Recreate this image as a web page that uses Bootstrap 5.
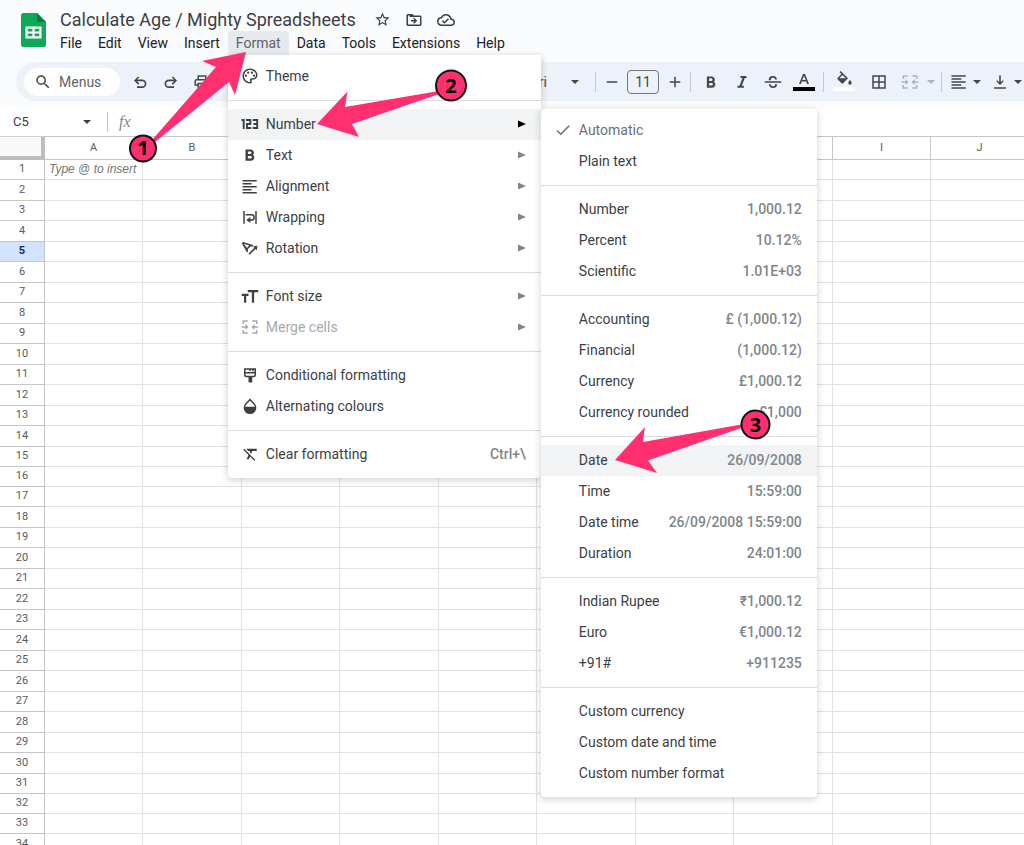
<!DOCTYPE html>
<html lang="en">
<head>
<meta charset="utf-8">
<meta name="viewport" content="width=device-width, initial-scale=1">
<title>Calculate Age / Mighty Spreadsheets</title>
<link href="https://cdn.jsdelivr.net/npm/bootstrap@5.3.0/dist/css/bootstrap.min.css" rel="stylesheet">
<style>
  body { font-family: Roboto, "Liberation Sans", sans-serif; font-size: 14px; line-height: 20px; color: #3c4043; background: #fff; }
  button { font: inherit; color: inherit; background: none; border: 0; padding: 0; }
  svg { display: block; flex: none; fill: currentColor; }
  .app-head { background: #f9fbfd; padding: 8px 0 7px 16px; }
  .logo { width: 44px; padding: 5px 0 0 5px; }
  .doc-title { font-size: 18px; line-height: 22px; color: #3c4043; margin: 0; font-weight: 400; }
  .title-row { height: 23px; gap: 14px; }
  .title-row .doc-title { margin-right: 4px; }
  .menubar { margin-left: -8px; }
  .menubar .top-item { display: block; height: 24px; padding: 2px 8px; color: #202124; border-radius: 4px 4px 0 0; }
  .menubar .top-item.is-open { background: #e6e9ed; color: #5f6368; }
  .sheet-menu { position: absolute; z-index: 20; background: #fff; padding: 6px 0 8px; box-shadow: 0 2px 6px 1px rgba(60,64,67,.2); border-radius: 0 0 4px 4px; }
  .format-menu { top: 24px; left: 0; width: 313px; }
  .number-menu { top: 0; left: 100%; width: 276px; border-radius: 4px; }
  .menu-line { position: relative; }
  .menu-line > button { display: flex; align-items: center; width: 100%; height: 31px; padding: 0 15px 2px 13px; gap: 7px; text-align: left; }
  .menu-line > button > span:first-of-type { flex: 1; }
  .menu-line.is-hot > button { background: #f1f3f4; }
  .menu-line.is-hot > button .arrow { color: #000; }
  .menu-line > button:disabled { color: #a6a9ae; }
  .menu-line .hint { color: #80868b; font-weight: 500; }
  .menu-line .chosen { color: #6b6f73; }
  .arrow { color: #80868b; }
  .number-menu .menu-line > button:not(.chosen) { padding-left: 38px; }
  .menu-rule { height: 1px; margin: 8px 0; background: #dadce0; opacity: 1; border: 0; }
  .callout-art { position: absolute; z-index: 40; pointer-events: none; overflow: visible; }
  .callout-art text { font: 700 20px "Open Sans", "Noto Sans", sans-serif; text-anchor: middle; fill: #000; stroke: none; }
  .tools { margin-top: 7px; height: 39px; background: #edf2fa; border-radius: 20px 0 0 20px; padding-left: 8px; color: #444746; }
  .search-pill { width: 97px; height: 28px; background: #fff; border-radius: 14px; padding-left: 10px; gap: 7px; color: #5f6368; }
  .tool { width: 31px; height: 30px; display: flex; align-items: center; justify-content: center; flex: none; }
  .tool-sm { width: 12px; }
  .tool-md { width: 25px; }
  .divide { width: 1px; height: 20px; background: #c7c7c7; flex: none; }
  .size-box { width: 32px; height: 24px; border: 1px solid #747775; border-radius: 4px; background: transparent; text-align: center; padding: 0; color: #444746; flex: none; }
  .formula-row { height: 28px; padding-left: 13px; }
  .name-box { width: 70px; border: 0; padding: 0; font-size: 13px; color: #3c4043; }
  .fx { font: italic 16px "Liberation Serif", serif; color: #80868b; margin-left: 11px; }
  .formula-in { border: 0; }
  .sheet-area { overflow: hidden; min-height: 0; }
  .cells { table-layout: fixed; border-collapse: separate; border-spacing: 0; width: 100%; min-width: 1029px; font: 11px/14px Roboto, "Liberation Sans", sans-serif; }
  .cells th, .cells td { padding: 0; border: 0 solid #e1e1e1; border-width: 0 1px 1px 0; overflow: hidden; white-space: nowrap; }
  .cells th { border-color: #c4c7c5; font-weight: 400; text-align: center; color: #575b5f; }
  .cells thead th { height: 24px; border-top-width: 1px; }
  .cells tbody tr { height: 20px; }
  .cells tbody tr:nth-child(2n) { height: 21px; }
  .cells tbody tr:nth-child(16n) { height: 20px; }
  .cells .corner { background: #f8f9fa; border: solid #bdbdbd; border-width: 1px 4px 4px 0; border-top-color: #d0d0d0; }
  .cells .current { background: #d3e3fd; color: #0b2a5e; font-weight: 700; }
  .cells .tip { font: italic 12px/14px "Liberation Sans", sans-serif; color: #757575; padding-left: 4px; }
  .c-side { width: 45px; } .c-a { width: 98px; } .c-b { width: 99px; }
</style>
</head>
<body class="vh-100 overflow-hidden d-flex flex-column">
<header class="app-head">
  <div class="d-flex">
    <div class="logo">
      <svg width="25" height="34" viewBox="0 0 25 34"><path fill="#0fa958" d="M2.500 0H16l9 9v22.500a2.500 2.500 0 0 1-2.500 2.500h-20A2.500 2.500 0 0 1 0 31.500v-29A2.500 2.500 0 0 1 2.500 0z"/><path fill="#087f3f" d="M16 0l9 9h-7a2 2 0 0 1-2-2z"/><path fill="#fff" fill-rule="evenodd" d="M4.500 13.500h16v12h-16zm2.200 2.200v2.700h4.700v-2.700zm6.900 0v2.700h4.700v-2.700zm-6.900 4.900v2.700h4.700v-2.700zm6.900 0v2.700h4.700v-2.700z"/></svg>
    </div>
    <div class="flex-grow-1">
      <div class="title-row d-flex align-items-center">
        <h1 class="doc-title">Calculate Age / Mighty Spreadsheets</h1>
        <button aria-label="Star"><svg width="17" height="17" viewBox="0 0 24 24"><path d="M22 9.240l-7.190-.62L12 2 9.190 8.630 2 9.240l5.460 4.730L5.820 21 12 17.270 18.180 21l-1.630-7.030L22 9.240zM12 15.400l-3.760 2.270 1-4.280-3.320-2.880 4.380-.38L12 6.100l1.710 4.040 4.380.38-3.320 2.880 1 4.280L12 15.400z"/></svg></button>
        <button aria-label="Move"><svg width="18" height="18" viewBox="0 0 24 24"><path d="M20 6h-8l-2-2H4c-1.100 0-2 .9-2 2v12c0 1.100.9 2 2 2h16c1.100 0 2-.9 2-2V8c0-1.100-.9-2-2-2zm0 12H4V6h2v2h14v10z"/><path d="M12.200 9l4 4-4 4-1.300-1.300 1.700-1.800H8v-1.800h4.600l-1.700-1.800z"/></svg></button>
        <button aria-label="Saved"><svg width="18" height="18" viewBox="0 0 24 24"><path d="M19.350 10.040A7.490 7.490 0 0 0 12 4C9.110 4 6.600 5.640 5.350 8.040A5.994 5.994 0 0 0 0 14c0 3.310 2.690 6 6 6h13c2.760 0 5-2.240 5-5 0-2.640-2.050-4.780-4.650-4.960zM19 18H6c-2.210 0-4-1.790-4-4 0-2.050 1.530-3.760 3.560-3.970l1.070-.11.5-.95A5.469 5.469 0 0 1 12 6c2.620 0 4.880 1.860 5.390 4.430l.3 1.500 1.530.11A2.980 2.980 0 0 1 22 15c0 1.650-1.350 3-3 3zm-9-3.820l-2.090-2.090L6.500 13.500 10 17l6.010-6.010-1.410-1.410z"/></svg></button>
      </div>
      <ul class="menubar list-unstyled d-flex mb-0">
        <li><button class="top-item">File</button></li>
        <li><button class="top-item">Edit</button></li>
        <li><button class="top-item">View</button></li>
        <li><button class="top-item">Insert</button></li>
        <li class="position-relative">
          <button class="top-item is-open" aria-expanded="true">Format</button>
          <ul class="sheet-menu format-menu list-unstyled">
            <li class="menu-line"><button><svg width="18" height="18" viewBox="0 0 24 24"><path d="M12 22C6.490 22 2 17.510 2 12S6.490 2 12 2s10 4.040 10 9c0 3.310-2.690 6-6 6h-1.770c-.28 0-.5.22-.5.5 0 .12.050.23.130.33.410.47.640 1.060.640 1.670A2.500 2.500 0 0 1 12 22zm0-18c-4.410 0-8 3.590-8 8s3.590 8 8 8c.28 0 .5-.22.5-.5a.54.54 0 0 0-.14-.35c-.41-.46-.63-1.050-.63-1.650a2.500 2.500 0 0 1 2.500-2.500H16c2.210 0 4-1.790 4-4 0-3.860-3.590-7-8-7z"/><circle cx="6.500" cy="11.500" r="1.500"/><circle cx="9.500" cy="7.500" r="1.500"/><circle cx="14.500" cy="7.500" r="1.500"/><circle cx="17.500" cy="11.500" r="1.500"/></svg><span>Theme</span></button></li>
            <li class="menu-rule"></li>
            <li class="menu-line is-hot"><button aria-expanded="true"><svg width="18" height="18" viewBox="0 0 18 18" fill="none" stroke="currentColor" stroke-width="1.900" style="fill:none"><path d="M.5 5h2.200v9M5 5h4.300v4H6v4h4.300M11.700 5h4.500v8h-4.500M12.500 9h3.700"/></svg><span>Number</span><svg class="arrow" width="8" height="8" viewBox="0 0 8 8"><path d="M0 .5L8 4 0 7.500z"/></svg></button>
              <ul class="sheet-menu number-menu list-unstyled">
                <li class="menu-line"><button class="chosen"><svg width="18" height="18" viewBox="0 0 24 24"><path d="M9 16.170L4.830 12l-1.420 1.410L9 19 21 7l-1.410-1.410z"/></svg><span>Automatic</span></button></li>
                <li class="menu-line"><button><span>Plain text</span></button></li>
                <li class="menu-rule"></li>
                <li class="menu-line"><button><span>Number</span><span class="hint">1,000.12</span></button></li>
                <li class="menu-line"><button><span>Percent</span><span class="hint">10.12%</span></button></li>
                <li class="menu-line"><button><span>Scientific</span><span class="hint">1.01E+03</span></button></li>
                <li class="menu-rule"></li>
                <li class="menu-line"><button><span>Accounting</span><span class="hint">£ (1,000.12)</span></button></li>
                <li class="menu-line"><button><span>Financial</span><span class="hint">(1,000.12)</span></button></li>
                <li class="menu-line"><button><span>Currency</span><span class="hint">£1,000.12</span></button></li>
                <li class="menu-line"><button><span>Currency rounded</span><span class="hint">£1,000</span></button></li>
                <li class="menu-rule"></li>
                <li class="menu-line is-hot"><button><span>Date</span><span class="hint">26/09/2008</span></button>
                  <svg class="callout-art" style="left:74px;top:-20px" width="158" height="52" viewBox="615 426 158 52"><path fill="#ff2f70" d="M615 461L645 428 643 443 744 425 744 428 648 461.500 657 474z"/><circle cx="755.500" cy="425.500" r="14" fill="#ff2f70" stroke="#111" stroke-width="2"/><text x="755.500" y="432.500">3</text></svg>
                </li>
                <li class="menu-line"><button><span>Time</span><span class="hint">15:59:00</span></button></li>
                <li class="menu-line"><button><span>Date time</span><span class="hint">26/09/2008 15:59:00</span></button></li>
                <li class="menu-line"><button><span>Duration</span><span class="hint">24:01:00</span></button></li>
                <li class="menu-rule"></li>
                <li class="menu-line"><button><span>Indian Rupee</span><span class="hint">₹1,000.12</span></button></li>
                <li class="menu-line"><button><span>Euro</span><span class="hint">€1,000.12</span></button></li>
                <li class="menu-line"><button><span>+91#</span><span class="hint">+911235</span></button></li>
                <li class="menu-rule"></li>
                <li class="menu-line"><button><span>Custom currency</span></button></li>
                <li class="menu-line"><button><span>Custom date and time</span></button></li>
                <li class="menu-line"><button><span>Custom number format</span></button></li>
              </ul>
              <svg class="callout-art" style="left:89px;top:-40px" width="150" height="70" viewBox="317 69 150 70"><path fill="#ff2f70" d="M317 124L347.500 91.500 345 107 439 91 439 94 352 124 359 137z"/><circle cx="451" cy="85.500" r="15" fill="#ff2f70" stroke="#111" stroke-width="2"/><text x="451" y="92.500">2</text></svg>
            </li>
            <li class="menu-line"><button><svg width="18" height="18" viewBox="0 0 24 24"><path d="M15.600 11.800c1-.7 1.600-1.800 1.600-2.800 0-2.500-1.900-4.500-4.500-4.500H6v15h7.400c2.400 0 4.300-2 4.300-4.300 0-1.500-.8-2.800-2.100-3.400zM9.200 7.200h3a1.800 1.800 0 0 1 0 3.600h-3zm3.600 9.500H9.200v-3.500h3.600a1.750 1.750 0 0 1 0 3.500z"/></svg><span>Text</span><svg class="arrow" width="8" height="8" viewBox="0 0 8 8"><path d="M0 .5L8 4 0 7.500z"/></svg></button></li>
            <li class="menu-line"><button><svg width="18" height="18" viewBox="0 0 24 24"><path d="M2 4h19v2H2zm0 4h12v2H2zm0 4h19v2H2zm0 4h12v2H2zm0 4h19v2H2z"/></svg><span>Alignment</span><svg class="arrow" width="8" height="8" viewBox="0 0 8 8"><path d="M0 .5L8 4 0 7.500z"/></svg></button></li>
            <li class="menu-line"><button><svg width="18" height="18" viewBox="0 0 24 24"><path d="M3 4h2v17H3zm16 0h2v17h-2zM6 8h8a4 4 0 0 1 0 9h-1.500v3L7 16l5.500-4v3H14a2 2 0 0 0 0-5H6z"/></svg><span>Wrapping</span><svg class="arrow" width="8" height="8" viewBox="0 0 8 8"><path d="M0 .5L8 4 0 7.500z"/></svg></button></li>
            <li class="menu-line"><button><svg width="18" height="18" viewBox="0 0 24 24"><path fill-rule="evenodd" d="M1 5.500L3 4l13 4-.2 2.200-2.600-.5-4.300 4 .8 2.500L8 18zm3 .8l3.800 5.600 3.200-3.200zM22 9l-1 6-1.800-1.700-7.700 7.700-1.500-1.500 7.700-7.700L16 10z"/></svg><span>Rotation</span><svg class="arrow" width="8" height="8" viewBox="0 0 8 8"><path d="M0 .5L8 4 0 7.500z"/></svg></button></li>
            <li class="menu-rule"></li>
            <li class="menu-line"><button><svg width="18" height="18" viewBox="0 0 24 24"><path d="M9 4v3h5.500v14h3V7H23V4H9zM1 12h3v9h3v-9h3V9H1v3z"/></svg><span>Font size</span><svg class="arrow" width="8" height="8" viewBox="0 0 8 8"><path d="M0 .5L8 4 0 7.500z"/></svg></button></li>
            <li class="menu-line"><button disabled><svg width="18" height="18" viewBox="0 0 24 24"><path d="M2 3h7v2H4v3H2zm13 0h7v5h-2V5h-5zM2 16h2v3h5v2H2zm18 0h2v5h-7v-2h5zM1 11h5V8l4 4-4 4v-3H1zm22 0h-5V8l-4 4 4 4v-3h5z"/></svg><span>Merge cells</span><svg class="arrow" width="8" height="8" viewBox="0 0 8 8"><path d="M0 .5L8 4 0 7.500z"/></svg></button></li>
            <li class="menu-rule"></li>
            <li class="menu-line"><button><svg width="18" height="18" viewBox="0 0 24 24"><path fill-rule="evenodd" d="M5 3h15v9a3 3 0 0 1-3 3h-2v6a1 1 0 0 1-1 1h-3a1 1 0 0 1-1-1v-6H7a3 3 0 0 1-3-3V4a1 1 0 0 1 1-1zm1 2v3h12V5h-1v2h-2V5h-2v1.500h-2V5zm0 5v1.500A1.500 1.500 0 0 0 7.500 13h9a1.500 1.500 0 0 0 1.500-1.500V10z"/></svg><span>Conditional formatting</span></button></li>
            <li class="menu-line"><button><svg width="18" height="18" viewBox="0 0 24 24"><path fill-rule="evenodd" d="M12 2l6 6.200a8.500 8.500 0 1 1-12 0zm0 3L7.300 9.700A6 6 0 0 0 5.600 13h12.800a6 6 0 0 0-1.700-3.300z"/></svg><span>Alternating colours</span></button></li>
            <li class="menu-rule"></li>
            <li class="menu-line"><button><svg width="18" height="18" viewBox="0 0 24 24"><path d="M3.270 5L2 6.270l6.970 6.970L6.500 19h3l1.570-3.660L16.730 21 18 19.730 3.550 5.270 3.270 5zM6 5v.18L8.820 8h2.400l-.72 1.680 2.100 2.100L14.210 8H20V5H6z" transform="translate(1 0)"/></svg><span>Clear formatting</span><span class="hint">Ctrl+\</span></button></li>
          </ul>
          <svg class="callout-art" style="left:-99px;top:20px" width="120" height="120" viewBox="129 51 120 120"><path fill="#ff2f70" d="M246 52L202 61 216 67 152 140 155 142 229 82 235 95z"/><circle cx="143" cy="148.500" r="13" fill="#ff2f70" stroke="#111" stroke-width="2"/><text x="143" y="155">1</text></svg>
        </li>
        <li><button class="top-item">Data</button></li>
        <li><button class="top-item">Tools</button></li>
        <li><button class="top-item">Extensions</button></li>
        <li><button class="top-item">Help</button></li>
      </ul>
    </div>
  </div>
  <div class="tools d-flex align-items-center">
    <button class="search-pill d-flex align-items-center"><svg width="18" height="18" viewBox="0 0 24 24" color="#444746"><path d="M15.500 14h-.79l-.28-.27A6.471 6.471 0 0 0 16 9.500 6.500 6.500 0 1 0 9.500 16c1.610 0 3.090-.59 4.230-1.570l.27.28v.79l5 4.990L20.490 19l-4.990-5zm-6 0C7.010 14 5 11.990 5 9.500S7.010 5 9.500 5 14 7.010 14 9.500 11.990 14 9.500 14z"/></svg>Menus</button>
    <button class="tool ms-1" aria-label="Undo"><svg width="18" height="18" viewBox="0 0 24 24"><path d="M8 20v-2.200h7a3.400 3.400 0 0 0 0-6.800H8l3 3-1.500 1.500L4 10l5.500-5.500L11 6 8 8.800h7a5.600 5.600 0 0 1 0 11.200z"/></svg></button>
    <button class="tool" aria-label="Redo"><svg width="18" height="18" viewBox="0 0 24 24"><path d="M16 20v-2.200H9A3.400 3.400 0 0 1 9 11h7l-3 3 1.500 1.500L20 10l-5.500-5.500L13 6l3 2.800H9A5.600 5.600 0 0 0 9 20z"/></svg></button>
    <button class="tool" aria-label="Print"><svg width="18" height="18" viewBox="0 0 24 24"><path fill-rule="evenodd" d="M6 3h12v5h1a3 3 0 0 1 3 3v6h-4v4H6v-4H2v-6a3 3 0 0 1 3-3h1zm2 2v3h8V5zm8 14v-4H8v4zm2-4v-2H6v2H4v-4a1 1 0 0 1 1-1h14a1 1 0 0 1 1 1v4z"/></svg></button>
    <button class="font-pick d-flex align-items-center justify-content-end gap-4" style="width:365px">Calibri <svg width="8" height="4" viewBox="0 0 8 4"><path d="M0 0h8L4 4z"/></svg></button>
    <span class="divide ms-3"></span>
    <button class="tool" aria-label="Decrease font size"><svg width="18" height="18" viewBox="0 0 24 24"><path d="M5 11h14v2H5z"/></svg></button>
    <input class="size-box" aria-label="Font size" value="11">
    <button class="tool" aria-label="Increase font size"><svg width="18" height="18" viewBox="0 0 24 24"><path d="M11 5h2v6h6v2h-6v6h-2v-6H5v-2h6z"/></svg></button>
    <span class="divide me-1"></span>
    <button class="tool" aria-label="Bold"><svg width="18" height="18" viewBox="0 0 24 24"><path d="M15.600 11.800c1-.7 1.600-1.800 1.600-2.800 0-2.500-1.900-4.500-4.500-4.500H6.500v15h7c2.400 0 4.200-2 4.200-4.300 0-1.500-.8-2.800-2.100-3.400zM9.500 7.100h2.700a1.800 1.800 0 0 1 0 3.700H9.500zm3.300 9.700H9.500v-3.600h3.300a1.800 1.800 0 0 1 0 3.600z"/></svg></button>
    <button class="tool" aria-label="Italic"><svg width="18" height="18" viewBox="0 0 24 24"><path d="M10 4v2.600h2.600L8.700 17H6v2.600h8.500V17h-2.700l3.900-10.400H18V4z"/></svg></button>
    <button class="tool" aria-label="Strikethrough"><svg width="18" height="18" viewBox="0 0 24 24"><path d="M1 11h22v2H1zM6.500 9.500C6 6 8.500 4 12 4c3 0 5 1.500 5.300 4.500h-2.500C14.500 7 13.600 6.200 12 6.200c-2.200 0-3.300 1.300-2.800 3.300zM6.500 15c.3 3.300 2.500 5 5.500 5 3.500 0 5.700-2 5.400-5h-2.600c.1 1.800-1 2.800-2.800 2.800-1.700 0-2.800-.9-3-2.800z"/></svg></button>
    <button class="tool me-1" aria-label="Text colour"><svg width="22" height="18" viewBox="0 0 22 18"><path fill-rule="evenodd" d="M10 1h2l4 10h-1.900l-.9-2.500H8.700L7.800 11H6zm1 2L9.300 7h3.400z"/><path fill="#000" d="M0 14h22v4H0z"/></svg></button>
    <span class="divide me-1"></span>
    <button class="tool" aria-label="Fill colour"><svg width="22" height="22" viewBox="0 0 22 22"><path fill-rule="evenodd" d="M6.500 1l1.200-1 7.300 7.300-5 5a1 1 0 0 1-1.400 0l-4-4a1 1 0 0 1 0-1.400L8.400 3zM9.500 4L6.300 7.300h6.500zM17 9s1.700 1.900 1.700 3a1.700 1.700 0 0 1-3.400 0c0-1.100 1.700-3 1.700-3z"/><path fill="#fff" d="M0 16h22v4H0z"/></svg></button>
    <button class="tool ms-1" aria-label="Borders"><svg width="18" height="18" viewBox="0 0 24 24"><path fill-rule="evenodd" d="M3 3h18v18H3zm2 2v6h6V5zm8 0v6h6V5zm-8 8v6h6v-6zm8 0v6h6v-6z"/></svg></button>
    <button class="tool" aria-label="Merge cells" disabled style="color:#b0b3b6"><svg width="18" height="18" viewBox="0 0 24 24"><path d="M2 3h7v2H4v3H2zm13 0h7v5h-2V5h-5zM2 16h2v3h5v2H2zm18 0h2v5h-7v-2h5zM1 11h5V8l4 4-4 4v-3H1zm22 0h-5V8l-4 4 4 4v-3h5z"/></svg></button>
    <button class="tool tool-sm" aria-label="Merge options" disabled style="color:#b0b3b6"><svg width="8" height="4" viewBox="0 0 8 4"><path d="M0 0h8L4 4z"/></svg></button>
    <span class="divide mx-1"></span>
    <button class="tool tool-md" aria-label="Align"><svg width="18" height="18" viewBox="0 0 24 24"><path d="M2 3h19v2H2zm0 4h13v2H2zm0 4h19v2H2zm0 4h13v2H2zm0 4h19v2H2z"/></svg></button>
    <button class="tool tool-sm me-1" aria-label="Align options"><svg width="8" height="4" viewBox="0 0 8 4"><path d="M0 0h8L4 4z"/></svg></button>
    <button class="tool tool-md" aria-label="Vertical align"><svg width="18" height="18" viewBox="0 0 24 24"><path d="M4 19h16v2H4zM11 3h2v9.200l2.600-2.600L17 11l-5 5-5-5 1.400-1.400 2.600 2.600z"/></svg></button>
    <button class="tool tool-sm" aria-label="Vertical options"><svg width="8" height="4" viewBox="0 0 8 4"><path d="M0 0h8L4 4z"/></svg></button>
  </div>
</header>
<div class="formula-row d-flex align-items-center">
  <input class="name-box" aria-label="Name box" value="C5">
  <svg width="8" height="4" viewBox="0 0 8 4"><path d="M0 0h8L4 4z"/></svg>
  <span class="divide ms-3 me-0"></span>
  <span class="fx">fx</span>
  <input class="formula-in flex-grow-1" aria-label="Formula">
</div>
<main class="sheet-area flex-grow-1">
  <table class="cells">
    <colgroup><col class="c-side"><col class="c-a"><col class="c-b"><col class="c-a"><col class="c-b"><col class="c-a"><col class="c-b"><col class="c-a"><col class="c-b"><col class="c-a"><col></colgroup>
    <thead><tr><th class="corner"></th><th>A</th><th>B</th><th>C</th><th>D</th><th>E</th><th>F</th><th>G</th><th>H</th><th>I</th><th>J</th></tr></thead>
    <tbody id="rows"></tbody>
  </table>
</main>
<script>
  // Ten empty cells per numbered row; the hint sits in A1 and row 5 is selected.
  const body = document.getElementById('rows');
  for (let n = 1; n <= 34; n++) {
    const row = body.insertRow();
    const head = document.createElement('th');
    head.scope = 'row';
    head.textContent = n;
    if (n === 5) head.className = 'current';
    row.append(head);
    for (let c = 0; c < 10; c++) row.insertCell();
    if (n === 1) { row.cells[1].className = 'tip'; row.cells[1].textContent = 'Type @ to insert'; }
  }
</script>
<script src="https://cdn.jsdelivr.net/npm/bootstrap@5.3.0/dist/js/bootstrap.bundle.min.js"></script>
</body>
</html>
